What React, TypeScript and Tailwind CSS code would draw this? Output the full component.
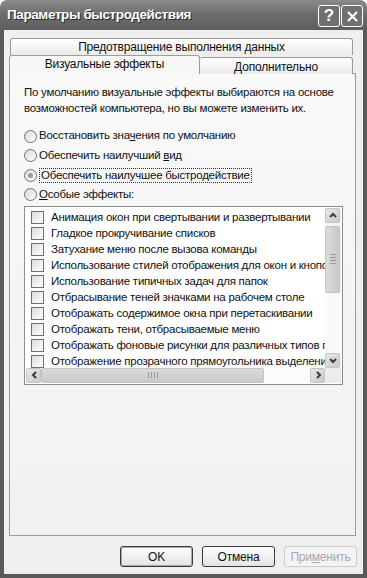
import React from "react";

const font = { fontFamily: '"Liberation Sans", Arial, sans-serif' };

const items = [
  "Анимация окон при свертывании и развертывании",
  "Гладкое прокручивание списков",
  "Затухание меню после вызова команды",
  "Использование стилей отображения для окон и кнопок",
  "Использование типичных задач для папок",
  "Отбрасывание теней значками на рабочем столе",
  "Отображать содержимое окна при перетаскивании",
  "Отображать тени, отбрасываемые меню",
  "Отображать фоновые рисунки для различных типов папок",
  "Отображение прозрачного прямоугольника выделения",
];

function Radio({ checked }: { checked?: boolean }) {
  return (
    <span className="flex h-[13px] w-[13px] shrink-0 items-center justify-center rounded-full border border-[#6f6f6f] bg-gradient-to-br from-[#d8d8d8] to-[#ffffff]">
      {checked && <span className="h-[5px] w-[5px] rounded-full bg-[#9a9a9a]" />}
    </span>
  );
}

function Chevron({ dir }: { dir: "up" | "down" | "left" | "right" }) {
  const d = {
    up: "M2 7 L5 4 L8 7",
    down: "M2 4 L5 7 L8 4",
    left: "M7 2 L4 5 L7 8",
    right: "M4 2 L7 5 L4 8",
  }[dir];
  return (
    <svg width="10" height="10" viewBox="0 0 10 10">
      <path d={d} fill="none" stroke="#3c3c3c" strokeWidth="2" />
    </svg>
  );
}

function ScrollBtn({ dir }: { dir: "up" | "down" | "left" | "right" }) {
  return (
    <div className="flex h-[15px] w-[15px] shrink-0 items-center justify-center rounded-[2px] border border-[#c4c4c4] bg-gradient-to-br from-[#e9e9e9] to-[#c9c9c9]">
      <Chevron dir={dir} />
    </div>
  );
}

function Button({ children, def, disabled }: { children: React.ReactNode; def?: boolean; disabled?: boolean }) {
  return (
    <div
      className={
        "flex h-[21px] w-[73px] items-center justify-center rounded-[3px] border text-[12px] tracking-[-0.2px] " +
        (def
          ? "border-[#3a3a3a] bg-gradient-to-b from-[#ffffff] to-[#e2e2e2] text-[#111] shadow-[inset_0_0_0_1px_#a8a8a8]"
          : disabled
          ? "border-[#cdcdcd] bg-[#f3f3f3] text-[#a8a8a8]"
          : "border-[#3a3a3a] bg-gradient-to-b from-[#ffffff] to-[#e2e2e2] text-[#111]")
      }
    >
      {children}
    </div>
  );
}

export default function App() {
  return (
    <div className="flex h-[578px] w-[367px] flex-col overflow-hidden bg-[#ffffff]" style={font}>
      {/* title bar */}
      <div className="flex h-[30px] shrink-0 items-center justify-between rounded-t-[7px] bg-gradient-to-b from-[#8a8a8a] via-[#6c6c6c] to-[#5e5e5e] pl-[7px] pr-[4px]">
        <span className="text-[13.5px] font-bold tracking-[-0.4px] text-white [text-shadow:1px_1px_0_#2a2a2a]">
          Параметры быстродействия
        </span>
        <div className="flex gap-[1px] pt-[2px]">
          <div className="flex h-[22px] w-[22px] items-center justify-center rounded-[3px] border border-white bg-[#707070] text-[17px] font-bold text-white">
            ?
          </div>
          <div className="flex h-[22px] w-[22px] items-center justify-center rounded-[3px] border border-white bg-[#707070]">
            <svg width="13" height="13" viewBox="0 0 13 13">
              <path d="M2 2 L11 11 M11 2 L2 11" stroke="white" strokeWidth="2.2" />
            </svg>
          </div>
        </div>
      </div>

      {/* body with frame */}
      <div className="flex flex-1 flex-col border-x-4 border-b-4 border-[#5a5a5a] bg-[#efefef] px-[5px]">
        {/* tabs */}
        <div className="mt-[8px] ml-[1px] flex h-[17px] w-[343px] items-center justify-center rounded-t-[3px] border border-b-0 border-[#9c9c9c] bg-gradient-to-b from-[#ffffff] to-[#ebebeb] text-[12px] tracking-[-0.2px] text-[#111]">
          Предотвращение выполнения данных
        </div>
        <div className="relative z-10 -mb-px flex items-end">
          <div className="flex h-[19px] w-[191px] items-center justify-center rounded-t-[3px] border border-b-0 border-[#9c9c9c] bg-[#f7f7f7] pb-[2px] text-[12px] tracking-[-0.2px] text-[#111]">
            Визуальные эффекты
          </div>
          <div className="flex h-[17px] w-[153px] items-center justify-center rounded-t-[3px] border border-b-0 border-l-0 border-[#9c9c9c] bg-gradient-to-b from-[#ffffff] to-[#ebebeb] pt-[2px] text-[12px] tracking-[-0.2px] text-[#111]">
            Дополнительно
          </div>
        </div>
        <div className="flex h-[463px] w-[347px] flex-col border border-[#9c9c9c] bg-gradient-to-b from-[#f9f9f9] to-[#f1f1f1] px-[14px] pt-[10px] text-[11.5px] tracking-[-0.25px] text-[#111]">
          <p className="leading-[16px]">
            По умолчанию визуальные эффекты выбираются на основе возможностей компьютера, но вы можете изменить их.
          </p>

          <div className="mt-[13px] flex flex-col gap-[5.5px]">
            <div className="flex h-[14px] items-center gap-[2px]">
              <Radio />
              <span>
                Восстановить зна<u>ч</u>ения по умолчанию
              </span>
            </div>
            <div className="flex h-[14px] items-center gap-[2px]">
              <Radio />
              <span>
                Обеспечить наилучший <u>в</u>ид
              </span>
            </div>
            <div className="flex h-[14px] items-center gap-[2px]">
              <Radio checked />
              <span className="border border-dotted border-[#333] px-[1px] leading-[13px]">
                Обеспечить наилучшее быстродействие
              </span>
            </div>
            <div className="flex h-[14px] items-center gap-[2px]">
              <Radio />
              <span>
                <u>О</u>собые эффекты:
              </span>
            </div>
          </div>

          {/* list box */}
          <div className="mt-[4px] flex h-[179px] w-[319px] flex-col border border-[#8c8c8c] bg-white p-[1px]">
            <div className="flex min-h-0 flex-1">
              <div className="min-w-0 flex-1 overflow-hidden pt-[2px]">
                {items.map((t) => (
                  <div key={t} className="flex h-[16px] items-center gap-[7px] whitespace-nowrap pl-[5px]">
                    <span className="h-[13px] w-[13px] shrink-0 border border-[#6f6f6f] bg-gradient-to-br from-[#dcdcdc] to-[#ffffff]" />
                    <span className="text-[11.5px] tracking-[-0.25px]">{t}</span>
                  </div>
                ))}
              </div>
              <div className="flex w-[16px] shrink-0 flex-col bg-[#f4f4f4]">
                <ScrollBtn dir="up" />
                <div className="mt-[3px] flex h-[67px] w-[15px] items-center justify-center rounded-[2px] border border-[#c4c4c4] bg-gradient-to-r from-[#dcdcdc] to-[#c8c8c8]">
                  <div className="flex flex-col gap-[2px]">
                    <span className="block h-px w-[6px] bg-[#9a9a9a]" />
                    <span className="block h-px w-[6px] bg-[#9a9a9a]" />
                    <span className="block h-px w-[6px] bg-[#9a9a9a]" />
                    <span className="block h-px w-[6px] bg-[#9a9a9a]" />
                  </div>
                </div>
                <div className="flex-1 bg-[#fafafa]" />
                <ScrollBtn dir="down" />
              </div>
            </div>
            <div className="flex h-[15px] shrink-0">
              <div className="flex flex-1 bg-[#f4f4f4]">
                <ScrollBtn dir="left" />
                <div className="flex h-[15px] w-[223px] items-center justify-center rounded-[2px] border border-[#c4c4c4] bg-gradient-to-b from-[#dcdcdc] to-[#c8c8c8]">
                  <div className="flex gap-[2px]">
                    <span className="block h-[6px] w-px bg-[#9a9a9a]" />
                    <span className="block h-[6px] w-px bg-[#9a9a9a]" />
                    <span className="block h-[6px] w-px bg-[#9a9a9a]" />
                    <span className="block h-[6px] w-px bg-[#9a9a9a]" />
                  </div>
                </div>
                <div className="flex-1 bg-[#fbfbfb]" />
                <ScrollBtn dir="right" />
              </div>
              <div className="w-[16px] bg-[#ececec]" />
            </div>
          </div>
        </div>

        {/* buttons */}
        <div className="mt-[10px] flex justify-end gap-[9px] pr-[1px]">
          <Button def>OK</Button>
          <Button>Отмена</Button>
          <Button disabled>
            При<u>м</u>енить
          </Button>
        </div>
      </div>
    </div>
  );
}
